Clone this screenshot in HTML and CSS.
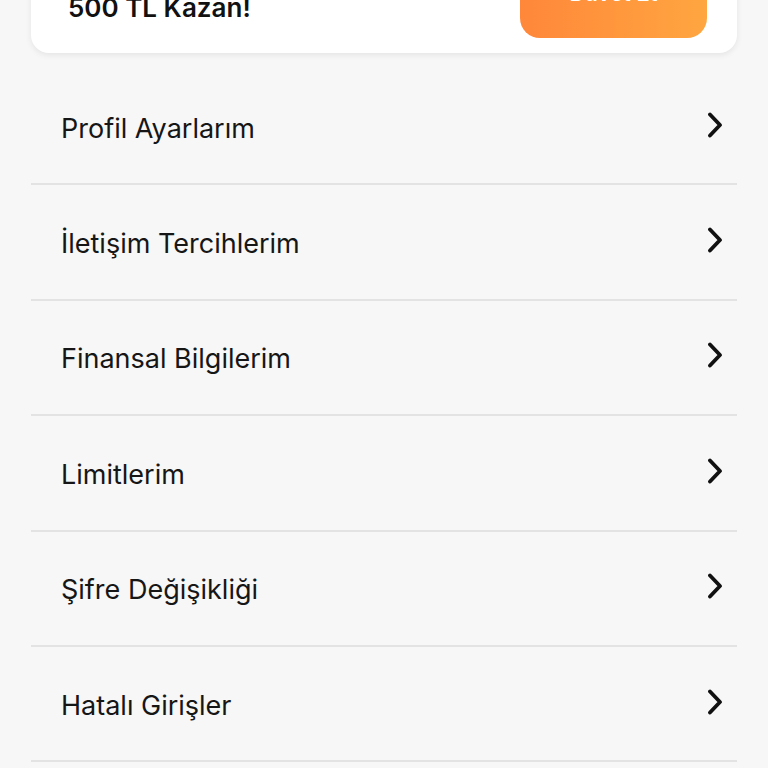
FILE: index.html
```html
<!DOCTYPE html>
<html lang="tr">
<head>
<meta charset="utf-8">
<title>Hesabım</title>
<link rel="stylesheet" href="styles.css">
</head>
<body>
<div class="page">
  <div class="promo-card">
    <div class="promo-text">
      <div class="promo-line">Arkadaşını Davet Et,</div>
      <div class="promo-line">500 TL Kazan!</div>
    </div>
    <button class="promo-btn">Davet Et</button>
  </div>
  <ul class="menu">
    <li class="menu-item"><span class="menu-label">Profil Ayarlarım</span><svg class="chev" viewBox="0 0 16 26" width="16" height="26"><polyline points="3,2.5 13,13 3,23.5"/></svg></li>
    <li class="menu-item"><span class="menu-label">İletişim Tercihlerim</span><svg class="chev" viewBox="0 0 16 26" width="16" height="26"><polyline points="3,2.5 13,13 3,23.5"/></svg></li>
    <li class="menu-item"><span class="menu-label">Finansal Bilgilerim</span><svg class="chev" viewBox="0 0 16 26" width="16" height="26"><polyline points="3,2.5 13,13 3,23.5"/></svg></li>
    <li class="menu-item"><span class="menu-label">Limitlerim</span><svg class="chev" viewBox="0 0 16 26" width="16" height="26"><polyline points="3,2.5 13,13 3,23.5"/></svg></li>
    <li class="menu-item"><span class="menu-label">Şifre Değişikliği</span><svg class="chev" viewBox="0 0 16 26" width="16" height="26"><polyline points="3,2.5 13,13 3,23.5"/></svg></li>
    <li class="menu-item"><span class="menu-label">Hatalı Girişler</span><svg class="chev" viewBox="0 0 16 26" width="16" height="26"><polyline points="3,2.5 13,13 3,23.5"/></svg></li>
    <li class="menu-item"><span class="menu-label">Çıkış Yap</span><svg class="chev" viewBox="0 0 16 26" width="16" height="26"><polyline points="3,2.5 13,13 3,23.5"/></svg></li>
  </ul>
</div>
</body>
</html>
```
FILE: styles.css
```css
html, body {
  margin: 0;
  padding: 0;
  background: #f7f7f7;
  overflow: hidden;
}
body {
  font-family: Inter, "Noto Sans", sans-serif;
  color: #161616;
}
.page {
  padding: 0 31px;
  height: 768px;
  overflow: hidden;
}
.promo-card {
  margin-top: -70px;
  height: 123px;
  box-sizing: border-box;
  background: #ffffff;
  border-radius: 18px;
  box-shadow: 0 2px 6px rgba(0, 0, 0, 0.08);
  display: flex;
  align-items: flex-end;
  justify-content: space-between;
  padding: 0 30px 15px 37px;
}
.promo-text {
  margin-bottom: 13px;
  font-weight: 600;
  font-size: 26px;
  line-height: 34px;
  color: #111111;
}
.promo-btn {
  width: 187px;
  height: 80px;
  border: none;
  border-radius: 20px;
  background: linear-gradient(90deg, #ff873a 0%, #ffa640 100%);
  color: #ffffff;
  font-family: inherit;
  font-weight: 600;
  font-size: 22px;
  padding: 0 0 10px 0;
}
.menu {
  list-style: none;
  margin: 17px 0 0 0;
  padding: 0;
}
.menu-item {
  box-sizing: border-box;
  height: 115.4px;
  border-bottom: 2px solid #e3e3e3;
  display: flex;
  align-items: center;
  justify-content: space-between;
  padding: 0 14px 0 30px;
}
.menu-label {
  font-size: 27px;
  font-weight: 400;
  padding-top: 3px;
}
.chev {
  display: block;
  margin-top: -4px;
}
.chev polyline {
  fill: none;
  stroke: #111111;
  stroke-width: 3.8;
  stroke-linecap: round;
  stroke-linejoin: round;
}
```
